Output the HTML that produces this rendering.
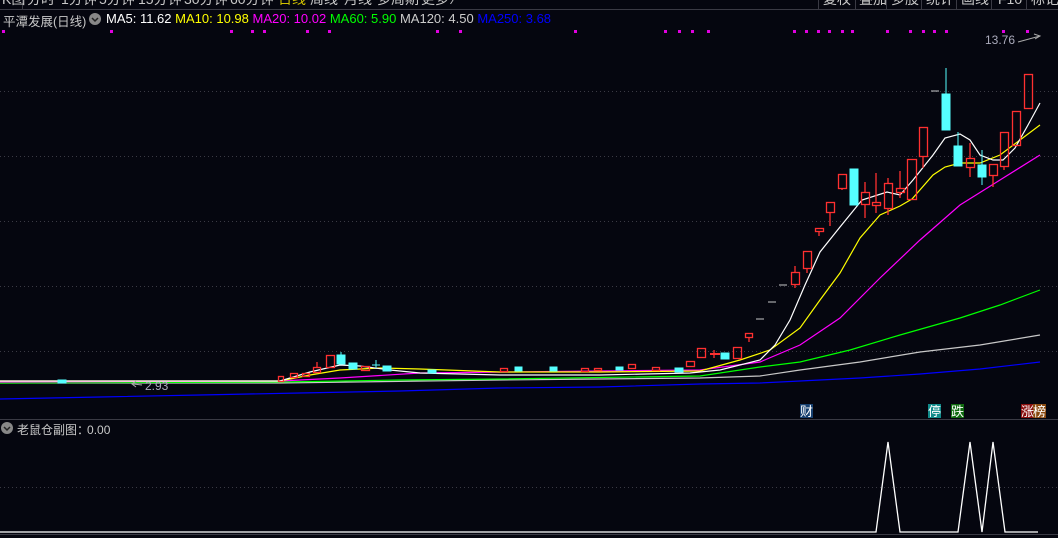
<!DOCTYPE html>
<html><head><meta charset="utf-8"><style>
html,body{margin:0;padding:0;background:#05060f;width:1058px;height:538px;overflow:hidden;font-family:"Liberation Sans","Noto Sans CJK SC",sans-serif}
.t{position:absolute;white-space:nowrap}
</style></head><body>
<svg width="1058" height="538" style="position:absolute;left:0;top:0" xmlns="http://www.w3.org/2000/svg">
<rect width="1058" height="538" fill="#05060f"/>
<line x1="0" y1="9.5" x2="1058" y2="9.5" stroke="#3a3a44"/>
<line x1="22.5" y1="0" x2="22.5" y2="9" stroke="#3a3a44"/>
<g stroke="#3a3a44"><line x1="818.5" y1="0" x2="818.5" y2="9"/><line x1="855.5" y1="0" x2="855.5" y2="9"/><line x1="886.5" y1="0" x2="886.5" y2="9"/><line x1="921.5" y1="0" x2="921.5" y2="9"/><line x1="956.5" y1="0" x2="956.5" y2="9"/><line x1="991.5" y1="0" x2="991.5" y2="9"/><line x1="1026.5" y1="0" x2="1026.5" y2="9"/></g>
<g font-size="14" fill="#c8c8c8" font-family="Liberation Sans,Noto Sans CJK SC,sans-serif">
<text x="2" y="4">K图</text>
<text x="27" y="4">分时</text><text x="61" y="4">1分钟</text><text x="99" y="4">5分钟</text><text x="138" y="4">15分钟</text><text x="184" y="4">30分钟</text><text x="230" y="4">60分钟</text>
<text x="278" y="4" fill="#d0c000">日线</text>
<text x="310" y="4">周线</text><text x="344" y="4">月线</text><text x="377" y="4">多周期</text><text x="421" y="4">更多 ⁄</text>
<text x="823" y="4">复权</text><text x="859" y="4">叠加</text><text x="891" y="4">多股</text><text x="926" y="4">统计</text><text x="961" y="4">画线</text><text x="998" y="4">F10</text><text x="1031" y="4">标记</text>
</g>
<g stroke="#3a3a44" stroke-dasharray="1 3"><line x1="0" y1="91.5" x2="1058" y2="91.5"/><line x1="0" y1="156.5" x2="1058" y2="156.5"/><line x1="0" y1="221.5" x2="1058" y2="221.5"/><line x1="0" y1="286.5" x2="1058" y2="286.5"/><line x1="0" y1="351.5" x2="1058" y2="351.5"/><line x1="0" y1="487.5" x2="1058" y2="487.5"/></g>
<line x1="0" y1="419.5" x2="1058" y2="419.5" stroke="#3a3a44"/>
<line x1="0" y1="534.5" x2="1058" y2="534.5" stroke="#3a3a44"/>
<g fill="#e000e0">
<rect x="2" y="30" width="3" height="3"/><rect x="110" y="30" width="3" height="3"/><rect x="230" y="30" width="3" height="3"/><rect x="251" y="30" width="3" height="3"/><rect x="263" y="30" width="3" height="3"/><rect x="306" y="30" width="3" height="3"/><rect x="328" y="30" width="3" height="3"/>
<rect x="436" y="30" width="3" height="3"/><rect x="459" y="30" width="3" height="3"/><rect x="574" y="30" width="3" height="3"/><rect x="664" y="30" width="3" height="3"/><rect x="678" y="30" width="3" height="3"/><rect x="691" y="30" width="3" height="3"/><rect x="707" y="30" width="3" height="3"/>
<rect x="793" y="30" width="3" height="3"/><rect x="805" y="30" width="3" height="3"/><rect x="817" y="30" width="3" height="3"/><rect x="828" y="30" width="3" height="3"/><rect x="841" y="30" width="3" height="3"/><rect x="851" y="30" width="3" height="3"/><rect x="886" y="30" width="3" height="3"/><rect x="909" y="30" width="3" height="3"/><rect x="922" y="30" width="3" height="3"/><rect x="933" y="30" width="3" height="3"/><rect x="945" y="30" width="3" height="3"/><rect x="1002" y="30" width="3" height="3"/><rect x="1026" y="30" width="3" height="3"/>
</g>
<g fill="none" stroke-width="1.2">
<polyline stroke="#0000ff" points="0,399 100,397 200,395 300,393 400,391 500,388 600,387 700,384 760,383 800,381 860,378 920,374 980,369 1040,362"/>
<polyline stroke="#c8c8c8" points="0,383 280,383 500,380 700,378 760,376 800,370 860,362 920,352 980,345 1040,335"/>
<polyline stroke="#00ff00" points="0,383 280,382 400,380 500,379 700,376 760,367 800,362 850,350 900,335 960,318 1000,305 1040,290"/>
<polyline stroke="#ff00ff" points="0,382 280,381 340,378 420,373 600,371 700,370 760,362 800,345 840,318 880,278 920,240 960,205 1000,180 1040,155"/>
<polyline stroke="#ffff00" points="0,381 280,381 310,375 340,370 380,368 420,369 500,372 600,372 700,371 740,360 770,350 800,328 820,300 840,273 860,238 880,215 900,206 912,199 933,175 945,167 960,163 980,163 1000,155 1020,140 1040,125"/>
<polyline stroke="#ffffff" points="0,381 280,381 310,372 340,365 360,366 390,370 420,373 500,375 600,375 690,373 720,370 760,360 775,345 790,320 805,285 820,252 840,227 862,200 887,192 900,195 913,180 933,155 945,138 960,134 970,140 980,155 993,160 1003,160 1015,148 1028,125 1040,103"/>
</g>
<g stroke="#ff3030" fill="none" stroke-width="1.3">
<rect x="278.5" y="376.5" width="5" height="5"/><rect x="290.5" y="373.5" width="7" height="4"/><rect x="302.5" y="373.5" width="7" height="3"/><rect x="313.5" y="367.5" width="7" height="5"/><line x1="317" y1="362" x2="317" y2="367"/>
<rect x="326.5" y="355.5" width="8" height="12"/><rect x="361.5" y="366.5" width="8" height="4"/>
<rect x="500.5" y="368.5" width="7" height="3"/><rect x="581.5" y="368.5" width="7" height="3"/><rect x="628.5" y="364.5" width="7" height="4"/><rect x="594.5" y="368.5" width="7" height="2"/><rect x="652.5" y="367.5" width="7" height="3"/>
<rect x="686.5" y="361.5" width="8" height="5"/>
<rect x="697.5" y="348.5" width="8" height="9"/><line x1="710" y1="354" x2="720" y2="354" stroke-width="2"/><line x1="714" y1="350" x2="714" y2="358"/>
<rect x="733.5" y="347.5" width="8" height="11"/><rect x="745.5" y="333.5" width="7" height="4"/><line x1="749" y1="337" x2="749" y2="342"/>
<rect x="791.5" y="272.5" width="8" height="12"/><line x1="795" y1="266" x2="795" y2="272"/><line x1="795" y1="284" x2="795" y2="288"/>
<rect x="803.5" y="251.5" width="8" height="17"/><line x1="807" y1="268" x2="807" y2="273"/>
<rect x="815.5" y="228.5" width="8" height="3"/><line x1="819" y1="231" x2="819" y2="236"/>
<rect x="826.5" y="202.5" width="8" height="10"/><line x1="830" y1="212" x2="830" y2="226"/>
<rect x="838.5" y="174.5" width="8" height="14"/><line x1="842" y1="188" x2="842" y2="190"/>
<rect x="861.5" y="192.5" width="8" height="12"/><line x1="865" y1="182" x2="865" y2="192"/><line x1="865" y1="204" x2="865" y2="218"/>
<rect x="872.5" y="202.5" width="8" height="3"/><line x1="876" y1="173" x2="876" y2="202"/><line x1="876" y1="205" x2="876" y2="213"/>
<rect x="884.5" y="183.5" width="8" height="25"/><line x1="888" y1="178" x2="888" y2="183"/><line x1="888" y1="208" x2="888" y2="215"/>
<rect x="896.5" y="188.5" width="8" height="4"/><line x1="900" y1="171" x2="900" y2="188"/><line x1="900" y1="192" x2="900" y2="198"/>
<rect x="907.5" y="159.5" width="9" height="40"/>
<rect x="919.5" y="127.5" width="8" height="29"/><line x1="923" y1="156" x2="923" y2="168"/>
<rect x="966.5" y="158.5" width="8" height="9"/><line x1="970" y1="143" x2="970" y2="158"/><line x1="970" y1="167" x2="970" y2="177"/>
<rect x="989.5" y="164.5" width="8" height="11"/><line x1="993" y1="175" x2="993" y2="187"/>
<rect x="1000.5" y="132.5" width="8" height="34"/><line x1="1004" y1="166" x2="1004" y2="170"/>
<rect x="1012.5" y="111.5" width="8" height="34"/>
<rect x="1024.5" y="74.5" width="8" height="34"/>
</g>
<g fill="#5ff" stroke="#5ff">
<rect x="337" y="355" width="8" height="9"/><line x1="341" y1="352" x2="341" y2="356"/>
<rect x="349" y="363" width="8" height="6"/><line x1="376" y1="360" x2="376" y2="368"/><line x1="372" y1="365" x2="380" y2="365"/>
<rect x="383" y="366" width="8" height="5"/><rect x="428" y="370" width="8" height="3"/><rect x="515" y="367" width="7" height="4"/><rect x="550" y="367" width="7" height="4"/><rect x="616" y="367" width="7" height="3"/><rect x="675" y="368" width="8" height="4"/>
<rect x="58" y="380" width="8" height="3"/>
<rect x="721" y="353" width="8" height="6"/>
<rect x="850" y="169" width="8" height="36"/>
<rect x="942" y="94" width="8" height="36"/><line x1="946" y1="68" x2="946" y2="94"/>
<rect x="954" y="146" width="8" height="20"/><line x1="958" y1="132" x2="958" y2="146"/>
<rect x="978" y="165" width="8" height="12"/><line x1="982" y1="150" x2="982" y2="185"/>
</g>
<g stroke="#c8c8c8"><line x1="756" y1="319" x2="764" y2="319"/><line x1="768" y1="302" x2="776" y2="302"/><line x1="779" y1="285" x2="787" y2="285"/><line x1="931" y1="91" x2="939" y2="91"/></g>
<g stroke="#aaa" fill="none"><polyline points="1018,42 1040,36"/><polyline points="1034,34 1040,36 1035,39"/><polyline points="142,385 133,384"/><polyline points="136,381 132,384 136,387"/></g>
<rect x="800" y="404" width="13" height="14" fill="#174070"/>
<rect x="928" y="404" width="13" height="14" fill="#108a8a"/>
<rect x="951" y="404" width="13" height="14" fill="#106a10"/>
<rect x="1021" y="404" width="12" height="14" fill="#8a1010"/>
<rect x="1033" y="404" width="13" height="14" fill="#8a4a10"/>
<g font-size="13" fill="#fff" font-family="Noto Sans CJK SC,sans-serif"><text x="800" y="416">财</text><text x="928" y="416">停</text><text x="951" y="416">跌</text><text x="1021" y="416">涨</text><text x="1033" y="416">榜</text></g>
<polyline fill="none" stroke="#fff" stroke-width="1.3" points="0,532 876,532 888,442 900,532 958,532 970,442 982,532 993,442 1005,532 1038,532"/>
<circle cx="95" cy="19" r="6" fill="#888"/><polyline points="92,18 95,21 98,18" fill="none" stroke="#222" stroke-width="1.5"/>
<circle cx="7" cy="428" r="6" fill="#888"/><polyline points="4,427 7,430 10,427" fill="none" stroke="#222" stroke-width="1.5"/>
</svg>
<div class="t" style="left:3px;top:11px;font-size:12.5px;color:#c8c8c8">平潭发展(日线)</div>
<div class="t" style="left:106px;top:11px;font-size:13px"><span style="color:#fff">MA5: 11.62</span> <span style="color:#ff0">MA10: 10.98</span> <span style="color:#f0f">MA20: 10.02</span> <span style="color:#0f0">MA60: 5.90</span> <span style="color:#ccc">MA120: 4.50</span> <span style="color:#00f">MA250: 3.68</span></div>
<div class="t" style="left:985px;top:33px;font-size:12px;color:#aab">13.76</div>
<div class="t" style="left:145px;top:379px;font-size:12px;color:#aab">2.93</div>
<div class="t" style="left:17px;top:421px;font-size:12px;color:#c8c8c8">老鼠仓副图<span style="letter-spacing:-2px">：</span>0.00</div>
</body></html>
